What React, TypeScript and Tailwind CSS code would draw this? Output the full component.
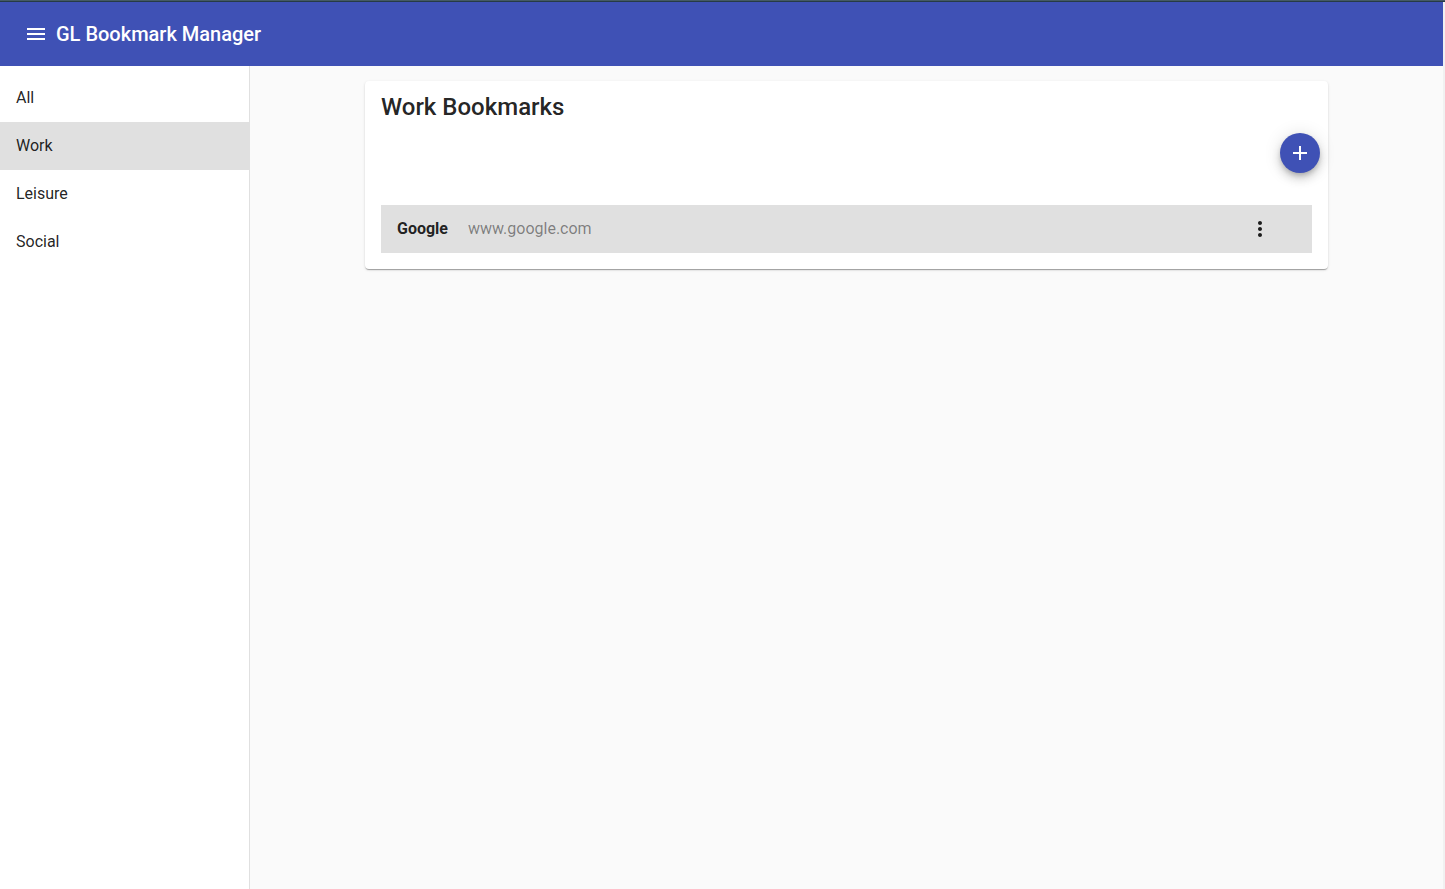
const categories = ['All', 'Work', 'Leisure', 'Social'];

const bookmarks = [{ title: 'Google', url: 'www.google.com' }];

function MenuIcon() {
  return (
    <svg className="size-6" viewBox="0 0 24 24" fill="currentColor" aria-hidden="true">
      <path d="M3 18h18v-2H3v2zm0-5h18v-2H3v2zm0-7v2h18V6H3z" />
    </svg>
  );
}

function AddIcon() {
  return (
    <svg className="size-6" viewBox="0 0 24 24" fill="currentColor" aria-hidden="true">
      <path d="M19 13h-6v6h-2v-6H5v-2h6V5h2v6h6v2z" />
    </svg>
  );
}

function MoreIcon() {
  return (
    <svg className="size-6" viewBox="0 0 24 24" fill="currentColor" aria-hidden="true">
      <path d="M12 8c1.1 0 2-.9 2-2s-.9-2-2-2-2 .9-2 2 .9 2 2 2zm0 2c-1.1 0-2 .9-2 2s.9 2 2 2 2-.9 2-2-.9-2-2-2zm0 6c-1.1 0-2 .9-2 2s.9 2 2 2 2-.9 2-2-.9-2-2-2z" />
    </svg>
  );
}

function Toolbar() {
  return (
    <header className="flex h-16 items-center bg-[#3f51b5] px-4 text-white">
      <button type="button" aria-label="Toggle menu" className="flex size-10 items-center justify-center">
        <MenuIcon />
      </button>
      <h1 className="text-xl font-medium">GL Bookmark Manager</h1>
    </header>
  );
}

function Sidebar({ active }: { active: string }) {
  return (
    <nav className="w-[250px] shrink-0 border-r border-[#e0e0e0] bg-white pt-2">
      <ul>
        {categories.map((name) => (
          <li key={name}>
            <a
              href={`#${name.toLowerCase()}`}
              className={`flex h-12 items-center px-4 text-base ${name === active ? 'bg-[#e0e0e0]' : ''}`}
            >
              {name}
            </a>
          </li>
        ))}
      </ul>
    </nav>
  );
}

function BookmarkCard() {
  return (
    <section className="rounded bg-white px-4 pt-2 pb-4 shadow-[0_2px_1px_-1px_rgba(0,0,0,0.2),0_1px_1px_0_rgba(0,0,0,0.14),0_1px_3px_0_rgba(0,0,0,0.12)]">
      <h2 className="py-0.5 text-2xl font-medium">Work Bookmarks</h2>
      <div className="-mr-2 flex justify-end pt-2 pb-8">
        <button
          type="button"
          aria-label="Add bookmark"
          className="flex size-10 items-center justify-center rounded-full bg-[#3f51b5] text-white shadow-[0_3px_5px_-1px_rgba(0,0,0,0.2),0_6px_10px_0_rgba(0,0,0,0.14),0_1px_18px_0_rgba(0,0,0,0.12)]"
        >
          <AddIcon />
        </button>
      </div>
      <ul>
        {bookmarks.map(({ title, url }) => (
          <li key={title} className="flex h-12 items-center bg-[#e0e0e0] pr-8 pl-4 text-base">
            <span className="font-bold">{title}</span>
            <a href={`https://${url}`} className="ml-5 text-black/45">
              {url}
            </a>
            <button
              type="button"
              aria-label={`Options for ${title}`}
              className="ml-auto flex size-10 items-center justify-center"
            >
              <MoreIcon />
            </button>
          </li>
        ))}
      </ul>
    </section>
  );
}

export default function App() {
  return (
    <div className="flex min-h-screen flex-col bg-[#f1f1f1] font-[Roboto,sans-serif] text-black/87">
      <div className="h-0.5 border-b border-[#263b45] bg-[#455a64]" />
      <div className="mr-0.5 flex grow flex-col bg-[#fafafa]">
        <Toolbar />
        <div className="flex grow">
          <Sidebar active="Work" />
          <main className="grow px-[115px] pt-[15px]">
            <BookmarkCard />
          </main>
        </div>
      </div>
    </div>
  );
}
